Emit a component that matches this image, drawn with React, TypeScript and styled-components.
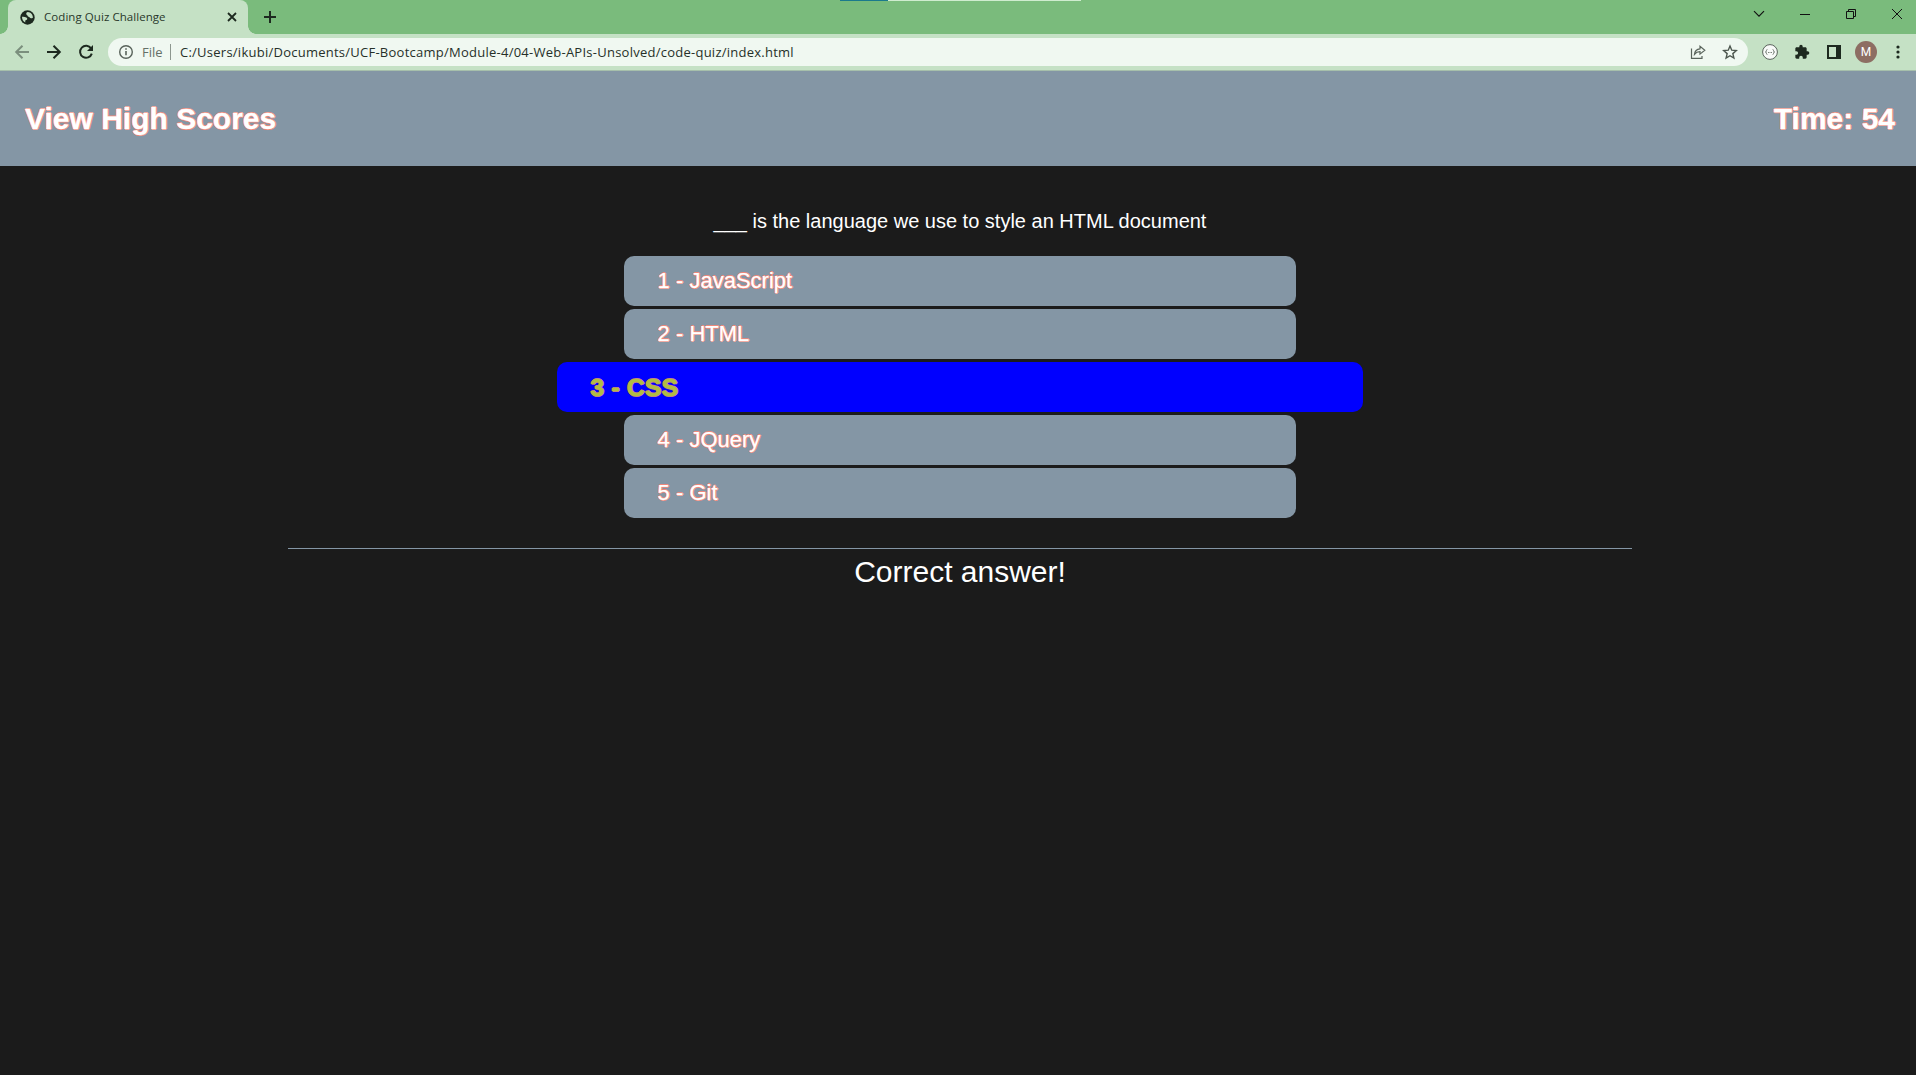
import React from "react";
import styled, { createGlobalStyle, css } from "styled-components";

const GlobalStyle = createGlobalStyle`
  html, body { margin: 0; padding: 0; background: #1b1b1b; overflow: hidden; }
  * { box-sizing: border-box; }
`;

const Screen = styled.div`
  width: 1920px;
  height: 1075px;
  display: flex;
  flex-direction: column;
  background: #1b1b1b;
  font-family: "Liberation Sans", Arial, sans-serif;
`;

const TabStrip = styled.div`
  position: relative;
  flex: none;
  height: 34px;
  display: flex;
  padding-left: 8px;
  background: #7abb7c;
  font-family: "Open Sans", "Noto Sans", sans-serif;
`;

const LoadLine = styled.div`
  position: absolute;
  left: 840px;
  top: 0;
  width: 241px;
  height: 1px;
  background: linear-gradient(to right, #1b7a8c 48px, #cfeccf 48px);
`;

const Tab = styled.div`
  position: relative;
  width: 240px;
  height: 34px;
  display: flex;
  align-items: center;
  padding: 0 9px 0 12px;
  border-radius: 8px 8px 0 0;
  background: #c5e1c5;
  &::before, &::after {
    content: "";
    position: absolute;
    bottom: 0;
    width: 8px;
    height: 8px;
  }
  &::before {
    left: -8px;
    background: radial-gradient(circle at 0 0, transparent 7.5px, #c5e1c5 8px);
  }
  &::after {
    right: -8px;
    background: radial-gradient(circle at 100% 0, transparent 7.5px, #c5e1c5 8px);
  }
`;

const TabTitle = styled.span`
  flex: 1;
  margin-left: 9px;
  font-size: 11.5px;
  letter-spacing: 0.06px;
  line-height: 16px;
  color: #29382b;
  white-space: nowrap;
`;

const Icon = styled.svg`
  display: block;
  flex: none;
`;

const NewTab = styled.div`
  display: flex;
  align-items: center;
  margin-left: 15px;
`;

const WindowControls = styled.div`
  display: flex;
  margin-left: auto;
`;

const WindowButton = styled.div`
  width: 46px;
  height: 28px;
  display: flex;
  align-items: center;
  justify-content: center;
`;

const Toolbar = styled.div`
  flex: none;
  height: 37px;
  display: flex;
  align-items: center;
  padding-bottom: 1px;
  background: #c5e1c5;
  border-bottom: 1px solid #a6bfab;
  font-family: "Open Sans", "Noto Sans", sans-serif;
`;

const NavGroup = styled.div`
  width: 108px;
  display: flex;
  gap: 16px;
  padding-left: 14px;
  flex: none;
`;

const AddressBar = styled.div`
  width: 1640px;
  height: 28px;
  flex: none;
  display: flex;
  align-items: center;
  padding: 0 10px 0 10px;
  border-radius: 14px;
  background: #f0f8f1;
`;

const Scheme = styled.span`
  width: 28px;
  margin-left: 8px;
  font-size: 13px;
  color: #657067;
`;

const Divider = styled.span`
  width: 1px;
  height: 16px;
  background: #8d978f;
`;

const Url = styled.span`
  flex: 1;
  margin-left: 9px;
  font-size: 13px;
  letter-spacing: 0.25px;
  color: #263029;
  white-space: nowrap;
`;

const AddressActions = styled.div`
  display: flex;
  gap: 16px;
`;

const Extensions = styled.div`
  display: flex;
  align-items: center;
  margin-left: 13px;
`;

const ExtensionSlot = styled.div<{ $width: number }>`
  width: ${(p) => p.$width}px;
  display: flex;
  justify-content: center;
`;

const Avatar = styled.div`
  width: 22px;
  height: 22px;
  border-radius: 50%;
  background: #8d6e63;
  color: #fff;
  font: 12px/22px Roboto, sans-serif;
  text-align: center;
`;

const outline = css`
  text-shadow: -1px 0 #f0887a, 0 1px #f0887a, 1px 0 #f0887a, 0 -1px #f0887a;
`;

const Header = styled.header`
  flex: none;
  height: 95px;
  display: flex;
  justify-content: space-between;
  align-items: center;
  padding: 0 25px 0 25px;
  background: #8496a5;
  color: #fff;
  font-size: 30px;
  font-weight: bold;
  -webkit-text-stroke: 0.3px #fff;
  ${outline}
`;

const Quiz = styled.main`
  display: flex;
  flex-direction: column;
  align-items: center;
`;

const Question = styled.p`
  margin: 44px 0 23px;
  font-size: 20px;
  line-height: 23px;
  color: #fff;
`;

const Choices = styled.div`
  width: 1344px;
  display: flex;
  flex-direction: column;
  align-items: center;
  gap: 3px;
`;

const plainChoice = css`
  width: 50%;
  padding: 0 33.6px;
  background: #8496a5;
  color: #fff;
  font-size: 22px;
  -webkit-text-stroke: 0.25px #fff;
  ${outline}
`;

const activeChoice = css`
  width: 60%;
  padding: 1px 33.6px 0;
  background: #0000ff;
  color: #b0bd42;
  font-size: 24.5px;
  font-weight: bold;
  letter-spacing: 0.3px;
  -webkit-text-stroke: 0.6px #b0bd42;
  text-shadow: -1px 0 #c07a90, 0 1px #c07a90, 1px 0 #c07a90, 0 -1px #c07a90;
`;

const Choice = styled.button<{ $active?: boolean }>`
  height: 50px;
  border: 0;
  border-radius: 10px;
  font-family: "Liberation Sans", Arial, sans-serif;
  text-align: left;
  ${(p) => (p.$active ? activeChoice : plainChoice)}
`;

const Result = styled.div`
  width: 1344px;
  margin-top: 30px;
  padding-top: 5px;
  border-top: 1px solid #8496a5;
  color: #fff;
  font-size: 30px;
  line-height: 35px;
  text-align: center;
`;

const choices = ["JavaScript", "HTML", "CSS", "JQuery", "Git"];
const selected = 2;

const Globe = () => (
  <Icon width="15" height="15" viewBox="0 0 15 15">
    <circle cx="7.5" cy="7.5" r="7.2" fill="#1d291f" />
    <path d="M7.900 2.100C6.600 2.400 6 3.200 6.300 4.300 6.500 5.200 7.600 5 7.700 6 7.800 7 9.300 6.600 9.700 7.500 10 8.500 11.500 8.600 12.900 7.700 12.900 4.700 10.700 2.300 7.900 2.100zM2 6.700C3.500 6.500 5.200 6.700 6.300 7.500 7.400 8 7.600 9.200 6.800 9.800 5.900 10.400 5.300 10 5.200 11L5.300 12.500C3.200 11.400 1.900 9.200 2 6.700z" fill="#c5e1c5" />
  </Icon>
);

const Arrow = ({ back }: { back?: boolean }) => (
  <Icon width="16" height="16" viewBox="0 0 16 16" fill="none" stroke={back ? "#7b8f7d" : "#1d291f"} strokeWidth="2">
    <path d={back ? "M15 8H2.5M8.5 1.7L2.2 8l6.3 6.3" : "M1 8h12.5M7.5 1.7L13.8 8l-6.3 6.3"} />
  </Icon>
);

const Reload = () => (
  <Icon width="16" height="16" viewBox="0 0 16 16" fill="none" stroke="#1d291f" strokeWidth="2">
    <path d="M13.1 4.4A6 6 0 1 0 13.8 9.6" />
    <path d="M15 1v6H9z" fill="#1d291f" stroke="none" />
  </Icon>
);

export default function App() {
  return (
    <Screen>
      <GlobalStyle />
      <TabStrip>
        <LoadLine />
        <Tab>
          <Globe />
          <TabTitle>Coding Quiz Challenge</TabTitle>
          <Icon width="14" height="14" viewBox="0 0 14 14" fill="none" stroke="#1d291f" strokeWidth="1.8">
            <path d="M3 3l8 8M11 3l-8 8" />
          </Icon>
        </Tab>
        <NewTab>
          <Icon width="14" height="14" viewBox="0 0 14 14" fill="none" stroke="#1d291f" strokeWidth="2">
            <path d="M7 1v12M1 7h12" />
          </Icon>
        </NewTab>
        <WindowControls>
          <WindowButton>
            <Icon width="12" height="12" viewBox="0 0 12 12" fill="none" stroke="#111" strokeWidth="1.15"><path d="M1 3.2l5 5 5-5" /></Icon>
          </WindowButton>
          <WindowButton>
            <Icon width="10" height="10" viewBox="0 0 10 10" stroke="#111"><path d="M0 5.5h10" /></Icon>
          </WindowButton>
          <WindowButton>
            <Icon width="10" height="10" viewBox="0 0 10 10" fill="none" stroke="#111"><path d="M.5 2.5h7v7h-7zM2.5 2.5v-2h7v7h-2" /></Icon>
          </WindowButton>
          <WindowButton>
            <Icon width="10" height="10" viewBox="0 0 10 10" stroke="#111"><path d="M0 0l10 10M10 0L0 10" /></Icon>
          </WindowButton>
        </WindowControls>
      </TabStrip>
      <Toolbar>
        <NavGroup>
          <Arrow back />
          <Arrow />
          <Reload />
        </NavGroup>
        <AddressBar>
          <Icon width="16" height="16" viewBox="0 0 16 16" fill="none" stroke="#59635b" strokeWidth="1.4">
            <circle cx="8" cy="8" r="6.3" />
            <path d="M8 7v4.3M8 4.3v1.5" strokeWidth="1.6" />
          </Icon>
          <Scheme>File</Scheme>
          <Divider />
          <Url>C:/Users/ikubi/Documents/UCF-Bootcamp/Module-4/04-Web-APIs-Unsolved/code-quiz/index.html</Url>
          <AddressActions>
            <Icon width="16" height="16" viewBox="0 0 16 16" fill="none" stroke="#59635b" strokeWidth="1.2">
              <path d="M1.5 4.500v9.900H12V12" />
              <path d="M4.500 10.300C4.800 7 6.700 5 10 4.800V2.300l4.800 3.900L10 10.100V7.700C7.600 7.700 5.900 8.500 4.500 10.300z" />
            </Icon>
            <Icon width="16" height="16" viewBox="0 0 16 16" fill="none" stroke="#4c564e" strokeWidth="1.4">
              <path d="M8 2l1.75 4.2 4.55.4-3.45 3 1.05 4.5L8 11.7l-3.9 2.4 1.05-4.5-3.45-3 4.55-.4z" />
            </Icon>
          </AddressActions>
        </AddressBar>
        <Extensions>
          <ExtensionSlot $width={18}>
            <Icon width="16" height="16" viewBox="0 0 16 16" fill="none" stroke="#59635b">
              <circle cx="8" cy="8" r="7.4" fill="#f8faf8" />
              <path strokeWidth=".8" d="M5.400 5.500q-1 0-1 1.200 0 1.300-1 1.300 1 0 1 1.300 0 1.200 1 1.200M10.600 5.500q1 0 1 1.200 0 1.300 1 1.300-1 0-1 1.300 0 1.200-1 1.200" />
              <path d="M6 8.500h4" strokeDasharray="1 .5" strokeWidth=".8" />
            </Icon>
          </ExtensionSlot>
          <ExtensionSlot $width={46}>
            <Icon width="16" height="16" viewBox="0 0 24 24" fill="#1d291f">
              <path d="M20.5 11H19V7c0-1.1-.9-2-2-2h-4V3.500a2.500 2.500 0 0 0-5 0V5H4c-1.100 0-2 .9-2 2v3.800h1.500a2.700 2.700 0 0 1 0 5.400H2V20c0 1.100.9 2 2 2h3.800v-1.500a2.700 2.700 0 0 1 5.400 0V22H17c1.100 0 2-.9 2-2v-4h1.500a2.500 2.500 0 0 0 0-5z" />
            </Icon>
          </ExtensionSlot>
          <ExtensionSlot $width={18}>
            <Icon width="14" height="14" viewBox="0 0 14 14">
              <path d="M0 0h14v14H0zM2 2v10h7V2z" fill="#1d291f" fillRule="evenodd" />
            </Icon>
          </ExtensionSlot>
          <ExtensionSlot $width={46}>
            <Avatar>M</Avatar>
          </ExtensionSlot>
          <ExtensionSlot $width={18}>
            <Icon width="4" height="14" viewBox="0 0 4 14" fill="#1d291f">
              <circle cx="2" cy="2" r="1.6" /><circle cx="2" cy="7" r="1.6" /><circle cx="2" cy="12" r="1.6" />
            </Icon>
          </ExtensionSlot>
        </Extensions>
      </Toolbar>
      <Header>
        <span>View High Scores</span>
        <span>Time: 54</span>
      </Header>
      <Quiz>
        <Question>___ is the language we use to style an HTML document</Question>
        <Choices>
          {choices.map((label, i) => (
            <Choice key={label} $active={i === selected}>{i + 1} - {label}</Choice>
          ))}
        </Choices>
        <Result>Correct answer!</Result>
      </Quiz>
    </Screen>
  );
}
